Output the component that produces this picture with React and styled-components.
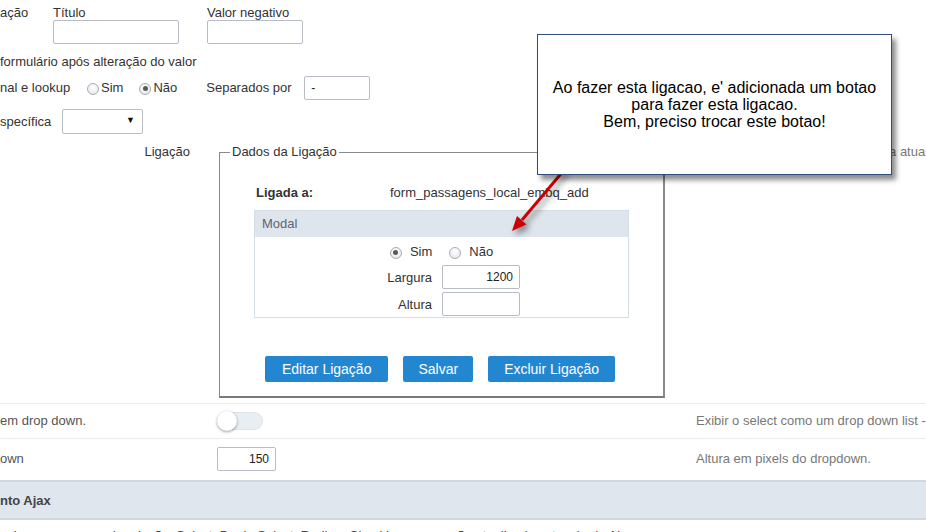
import React from "react";
import styled, { createGlobalStyle } from "styled-components";

const Global = createGlobalStyle`
  html, body { margin: 0; padding: 0; background: #fff; }
  body {
    font-family: "Liberation Sans", Arial, sans-serif;
    font-size: 13px;
    color: #333;
    overflow: hidden;
  }
  * { box-sizing: border-box; }
`;

const Page = styled.div`
  position: relative;
  width: 926px;
  height: 532px;
  overflow: hidden;
  white-space: nowrap;
`;

const TopForm = styled.div`
  display: flex;
  flex-direction: column;
`;

const Row = styled.div`
  display: flex;
  align-items: ${(p) => p.$align || "center"};
  margin-top: ${(p) => p.$mt || 0}px;
  height: ${(p) => (p.$h ? `${p.$h}px` : "auto")};
`;

const Text = styled.span`
  display: inline-block;
  line-height: 16px;
  color: ${(p) => p.$color || "#333"};
  width: ${(p) => (p.$w ? `${p.$w}px` : "auto")};
  margin-left: ${(p) => p.$ml || 0}px;
`;

const FieldGroup = styled.div`
  display: flex;
  flex-direction: column;
  margin-left: ${(p) => p.$ml || 0}px;
`;

const GroupLabel = styled.span`
  line-height: 15px;
  padding-top: 5px;
  color: #333;
  width: ${(p) => (p.$w ? `${p.$w}px` : "auto")};
`;

const Input = styled.div`
  width: ${(p) => p.$w}px;
  height: 24px;
  border: 1px solid #b7bcc5;
  border-radius: 2px;
  background: #fff;
  padding: 0 6px;
  line-height: 22px;
  font-size: 12px;
  color: #222;
  text-align: ${(p) => p.$align || "left"};
`;

const Select = styled.div`
  position: relative;
  width: ${(p) => p.$w}px;
  height: 25px;
  border: 1px solid #b7bcc5;
  border-radius: 2px;
  &::after {
    content: "▼";
    position: absolute;
    right: 7px;
    top: 5px;
    font-size: 9px;
    color: #111;
  }
`;

const RadioGroup = styled.div`
  display: flex;
  align-items: center;
  gap: ${(p) => p.$gap || 9}px;
  margin-top: ${(p) => p.$mt || 0}px;
  justify-content: ${(p) => (p.$center ? "center" : "flex-start")};
`;

const RadioItem = styled.label`
  display: inline-flex;
  align-items: center;
  gap: ${(p) => p.$gap || 2}px;
  color: #333;
  line-height: 16px;
`;

const RadioDot = styled.span`
  width: 12px;
  height: 12px;
  border-radius: 50%;
  border: 1px solid #a8acb2;
  background: radial-gradient(circle at 50% 35%, #ffffff 0%, #e2e4e8 100%);
  position: relative;
  margin-top: 1px;
  &::after {
    content: "";
    display: ${(p) => (p.$on ? "block" : "none")};
    position: absolute;
    left: 2.5px;
    top: 2.5px;
    width: 5px;
    height: 5px;
    border-radius: 50%;
    background: #5a5a5a;
  }
`;

const Radio = ({ on, label, gap }) => (
  <RadioItem $gap={gap}>
    <RadioDot $on={on} />
    <span>{label}</span>
  </RadioItem>
);

const LinkRow = styled.div`
  display: grid;
  grid-template-columns: 219px 446px 1fr;
  margin-top: 10px;
`;

const RowLabel = styled.span`
  text-align: right;
  padding-right: 29px;
  line-height: 16px;
  color: #333;
`;

const Fieldset = styled.fieldset`
  margin: 0;
  min-width: 0;
  padding: 0 34px 14px;
  border-top: 1px solid #8a8a8a;
  border-left: 1px solid #8a8a8a;
  border-right: 2px solid #8a8a8a;
  border-bottom: 2px solid #7a7a7a;
`;

const Legend = styled.legend`
  margin-left: -24px;
  padding: 0 2px;
  line-height: 16px;
  color: #333;
`;

const LinkedTo = styled.div`
  display: grid;
  grid-template-columns: 134px 1fr;
  margin-top: 25px;
  margin-left: 2px;
  line-height: 16px;
  color: #333;
`;

const ModalBox = styled.div`
  margin-top: 9px;
  border: 1px solid #d5dde5;
  padding-bottom: 1px;
`;

const ModalHeader = styled.div`
  height: 26px;
  line-height: 26px;
  background: #dfe5ec;
  padding-left: 7px;
  color: #5c6670;
`;

const SizeGrid = styled.div`
  display: grid;
  grid-template-columns: 177px 78px;
  column-gap: 10px;
  row-gap: 3px;
  align-items: center;
  margin-top: 5px;
`;

const SizeLabel = styled.span`
  text-align: right;
  color: #333;
`;

const ButtonBar = styled.div`
  display: flex;
  justify-content: center;
  gap: 15px;
  margin-top: 38px;
  padding-right: 3px;
`;

const Button = styled.button`
  height: 26px;
  padding: 0 ${(p) => p.$px || 15}px;
  border: none;
  border-radius: 2px;
  background: #2386d1;
  color: #fff;
  font-family: "Liberation Sans", Arial, sans-serif;
  font-size: 14px;
`;

const Lower = styled.div`
  margin-top: 5px;
`;

const TableRow = styled.div`
  display: grid;
  grid-template-columns: 217px 479px 1fr;
  align-items: ${(p) => p.$align || "center"};
  height: ${(p) => p.$h}px;
  border-top: 1px solid #ececec;
  padding-top: ${(p) => p.$pt || 0}px;
`;

const CellText = styled.span`
  line-height: 16px;
  color: ${(p) => p.$color || "#555"};
  padding-top: ${(p) => p.$pt || 0}px;
  padding-left: ${(p) => p.$pl || 0}px;
`;

const Toggle = styled.div`
  position: relative;
  width: 46px;
  height: 18px;
  border-radius: 9px;
  background: #e9eef3;
  border: 1px solid #dde3ea;
  &::after {
    content: "";
    position: absolute;
    left: -1px;
    top: -2px;
    width: 20px;
    height: 20px;
    border-radius: 50%;
    background: #fff;
    box-shadow: 0 1px 3px rgba(0, 0, 0, 0.4);
  }
`;

const SectionHeader = styled.div`
  height: 40px;
  background: #dfe6ee;
  border-top: 2px solid #cfd8e1;
  border-bottom: 2px solid #cfd8e1;
  display: flex;
  align-items: center;
  font-weight: bold;
  color: #444;
`;

const BottomText = styled.div`
  padding-top: 8px;
  line-height: 16px;
  color: #444;
`;

const Callout = styled.div`
  position: absolute;
  left: 537px;
  top: 34px;
  width: 355px;
  height: 141px;
  border: 1px solid #2d4f7f;
  background: #fff;
  box-shadow: 4px 5px 5px rgba(0, 0, 0, 0.45);
  display: flex;
  flex-direction: column;
  align-items: center;
  justify-content: center;
  font-size: 16px;
  line-height: 17px;
  color: #000;
  text-align: center;
  z-index: 2;
`;

const ArrowSvg = styled.svg`
  position: absolute;
  left: 495px;
  top: 165px;
  z-index: 1;
  filter: drop-shadow(3px 4px 3px rgba(0, 0, 0, 0.45));
`;

export default function App() {
  return (
    <Page>
      <Global />
      <TopForm>
        <Row $align="flex-start">
          <GroupLabel $w={53}>ação</GroupLabel>
          <FieldGroup>
            <GroupLabel>Título</GroupLabel>
            <Input $w={126} />
          </FieldGroup>
          <FieldGroup $ml={28}>
            <GroupLabel>Valor negativo</GroupLabel>
            <Input $w={96} />
          </FieldGroup>
        </Row>
        <Row $mt={10}>
          <Text>formulário após alteração do valor</Text>
        </Row>
        <Row $mt={6} $h={24}>
          <Text $w={87}>nal e lookup</Text>
          <RadioGroup $gap={16}>
            <Radio label="Sim" />
            <Radio on label="Não" />
          </RadioGroup>
          <Text $ml={29} $w={98}>Separados por</Text>
          <Input $w={66}>-</Input>
        </Row>
        <Row $mt={9} $h={25}>
          <Text $w={62}>specífica</Text>
          <Select $w={81} />
        </Row>
        <LinkRow>
          <RowLabel>Ligação</RowLabel>
          <Fieldset>
            <Legend>Dados da Ligação</Legend>
            <LinkedTo>
              <b>Ligada a:</b>
              <span>form_passagens_local_embq_add</span>
            </LinkedTo>
            <ModalBox>
              <ModalHeader>Modal</ModalHeader>
              <RadioGroup $center $mt={7} $gap={17}>
                <Radio on label="Sim" gap={8} />
                <Radio label="Não" gap={8} />
              </RadioGroup>
              <SizeGrid>
                <SizeLabel>Largura</SizeLabel>
                <Input $w={78} $align="right">1200</Input>
                <SizeLabel>Altura</SizeLabel>
                <Input $w={78} />
              </SizeGrid>
            </ModalBox>
            <ButtonBar>
              <Button $px={17}>Editar Ligação</Button>
              <Button>Salvar</Button>
              <Button $px={16}>Excluir Ligação</Button>
            </ButtonBar>
          </Fieldset>
          <CellText $color="#777" $pl={21}>
            Cria a ligação com outra aplicação a atual
          </CellText>
        </LinkRow>
      </TopForm>
      <Lower>
        <TableRow $h={35}>
          <CellText>em drop down.</CellText>
          <Toggle />
          <CellText $color="#777">Exibir o select como um drop down list - com opção de busca</CellText>
        </TableRow>
        <TableRow $h={42} $align="start" $pt={8}>
          <CellText $pt={4}>own</CellText>
          <Input $w={59} $align="right">150</Input>
          <CellText $color="#777" $pt={4}>Altura em pixels do dropdown.</CellText>
        </TableRow>
        <SectionHeader>nto Ajax</SectionHeader>
        <BottomText>
          ecione os campos da relação: Select, Duplo Select, Radio e Checkbox, que serão atualizados através de Ajax
        </BottomText>
      </Lower>
      <ArrowSvg width="80" height="80" viewBox="0 0 80 80">
        <line x1="70" y1="4" x2="27" y2="55" stroke="#cc0000" strokeWidth="3" />
        <polygon points="17,66 31.5,59.5 22,51" fill="#cc0000" />
      </ArrowSvg>
      <Callout>
        <div>Ao fazer esta ligacao, e' adicionada um botao</div>
        <div>para fazer esta ligacao.</div>
        <div>Bem, preciso trocar este botao!</div>
      </Callout>
    </Page>
  );
}
